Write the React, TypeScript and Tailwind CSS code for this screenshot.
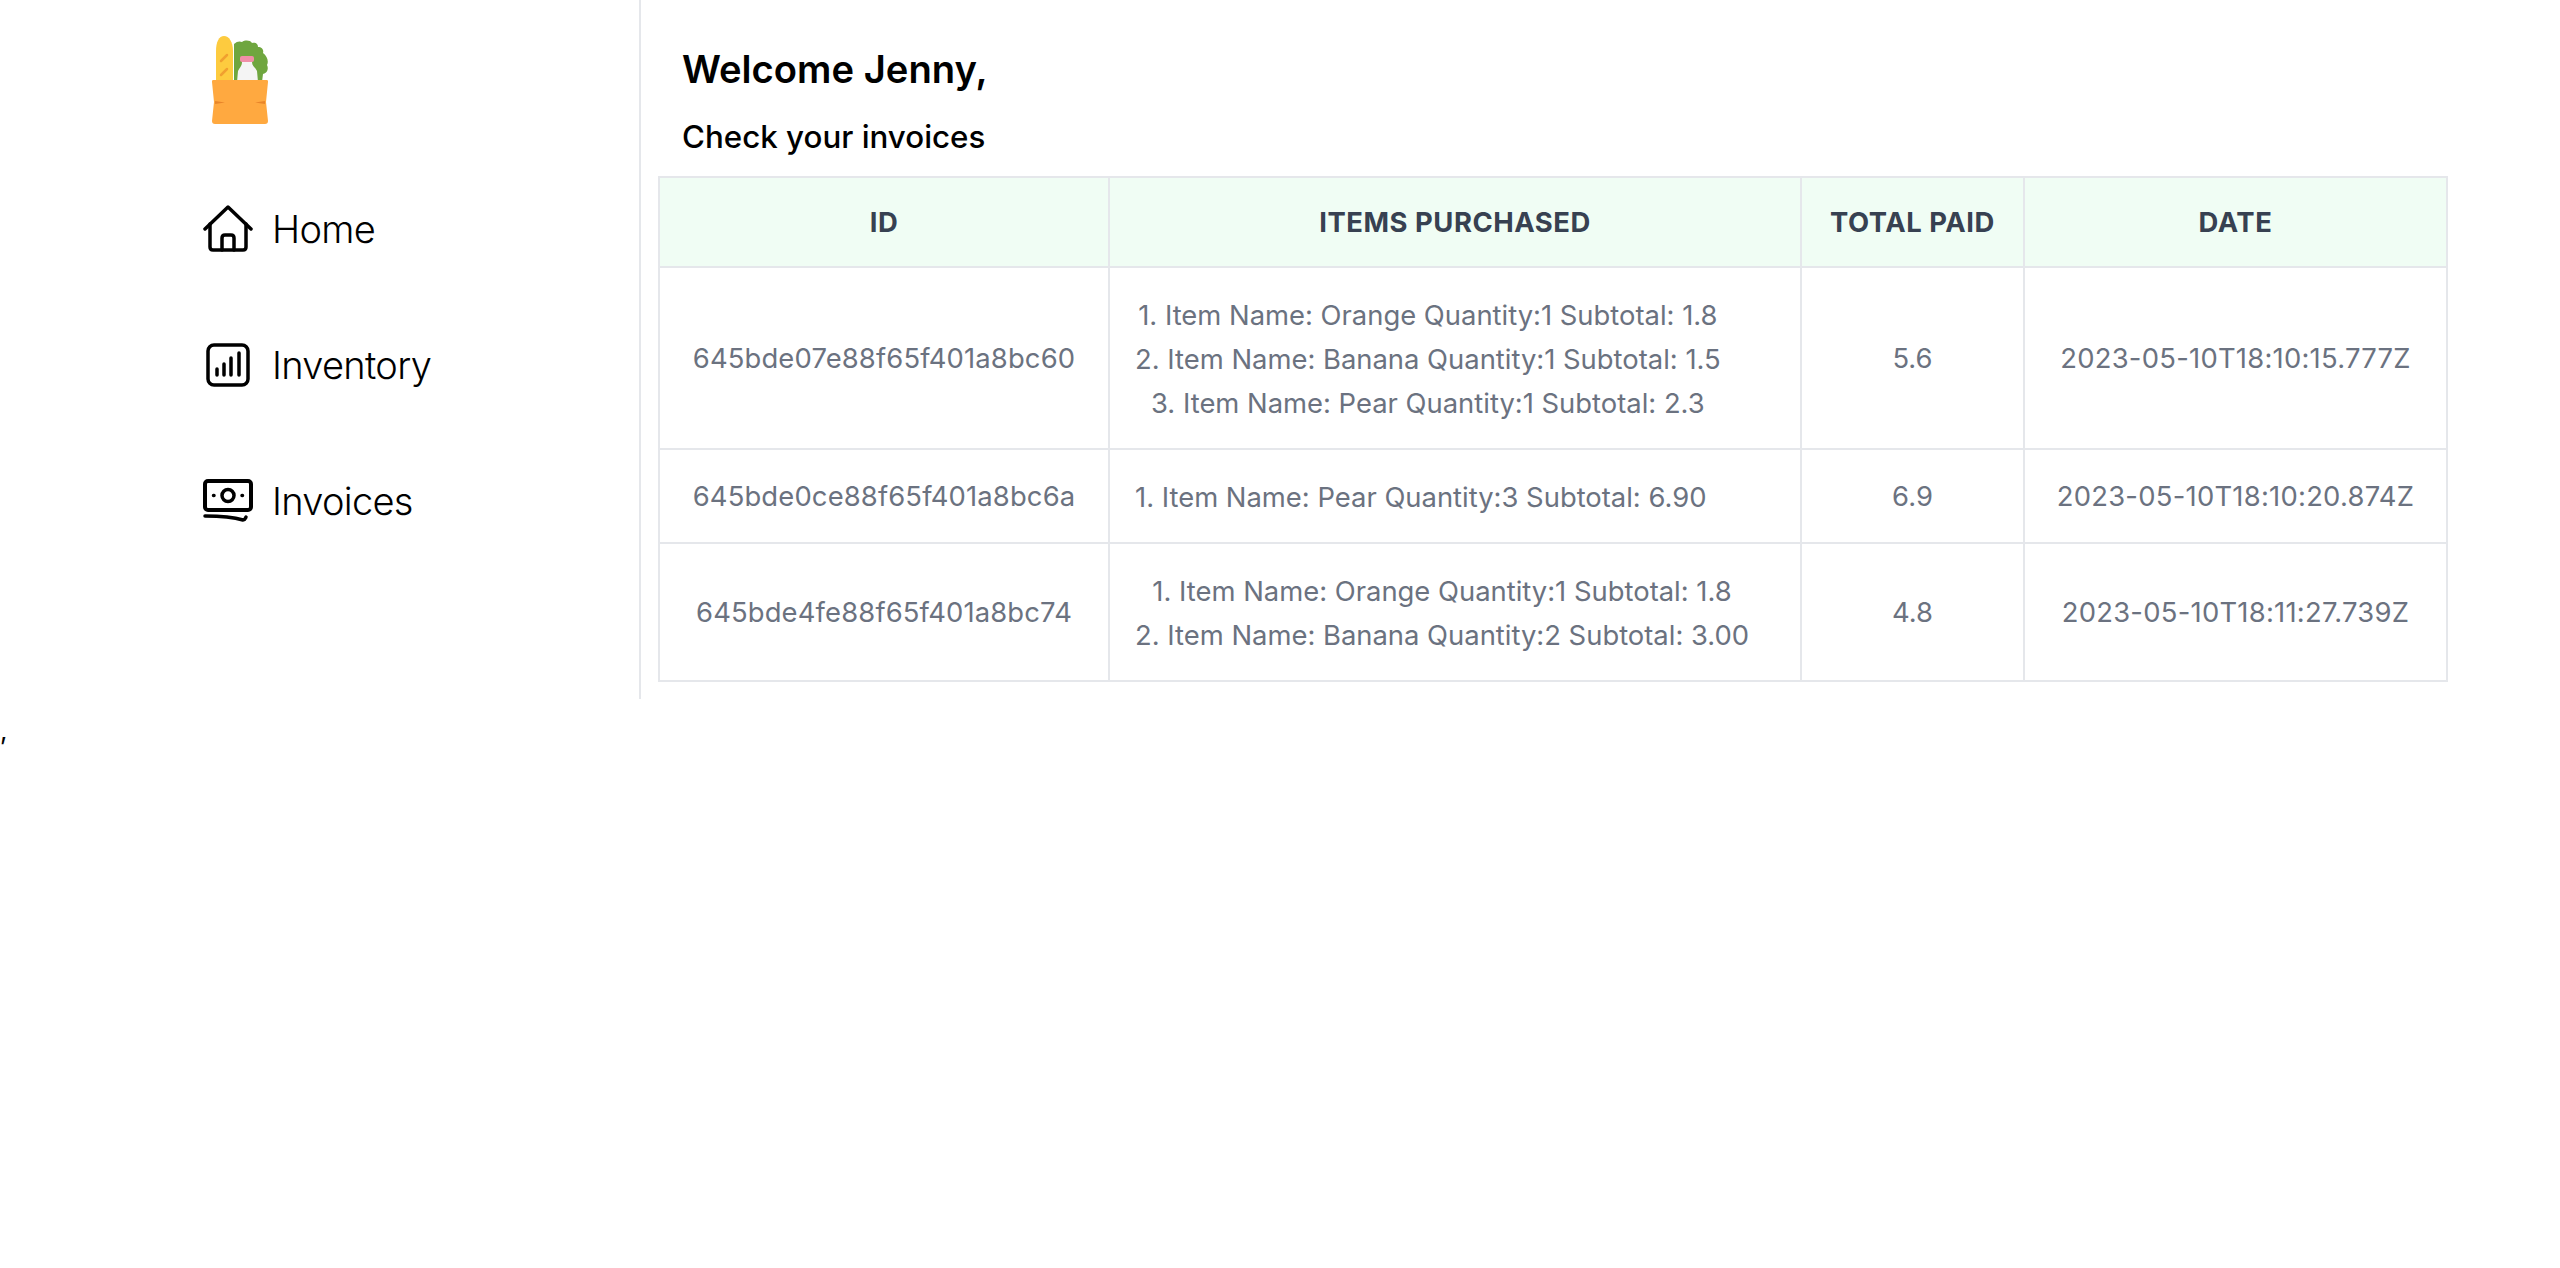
const rows = [
  {
    id: "645bde07e88f65f401a8bc60",
    items: [
      "1. Item Name: Orange Quantity:1 Subtotal: 1.8",
      "2. Item Name: Banana Quantity:1 Subtotal: 1.5",
      "3. Item Name: Pear Quantity:1 Subtotal: 2.3",
    ],
    total: "5.6",
    date: "2023-05-10T18:10:15.777Z",
  },
  {
    id: "645bde0ce88f65f401a8bc6a",
    items: ["1. Item Name: Pear Quantity:3 Subtotal: 6.90"],
    total: "6.9",
    date: "2023-05-10T18:10:20.874Z",
  },
  {
    id: "645bde4fe88f65f401a8bc74",
    items: [
      "1. Item Name: Orange Quantity:1 Subtotal: 1.8",
      "2. Item Name: Banana Quantity:2 Subtotal: 3.00",
    ],
    total: "4.8",
    date: "2023-05-10T18:11:27.739Z",
  },
];

const Logo = () => (
  <svg width="60" height="88" viewBox="0 0 60 88">
    <path d="M6 46V15C6 6 9 0 14 0s9 6 9 15v31z" fill="#fdcb3f" />
    <path d="M11 25l6-6M11 39l6-6" stroke="#f0a030" strokeWidth="2.500" strokeLinecap="round" />
    <path
      d="M24 46V8c3-3 6-3 8-2 3-2 8-2 10 1 4-1 6 1 6 4 4 0 6 3 5 6 4 3 6 8 4 12 2 4 0 8-4 9l-1 8z"
      fill="#6fa63f"
    />
    <path d="M27 46l1-11c2-4 4-5 4-9h10c0 4 3 5 5 9l1 11z" fill="#f4f4f4" />
    <rect x="30" y="20" width="14" height="6" rx="2" fill="#f08fa8" />
    <path
      d="M3 44h54c1 0 1 1 1 2l-2 20 2 19c0 2-1 3-3 3H5c-2 0-3-1-3-3l2-19-2-20c0-1 0-2 1-2z"
      fill="#ffa940"
    />
    <path d="M5 65l10 1.500-10 1.500zM55 65l-10 1.500 10 1.500z" fill="#e8852a" />
  </svg>
);

const HomeIcon = () => (
  <svg width="50" height="48" viewBox="0 0 50 48" fill="none" stroke="black" strokeWidth="3.500" strokeLinecap="round" strokeLinejoin="round">
    <path d="M2 24L25 2l23 22" />
    <path d="M7 19v23c0 2 1 3 3 3h30c2 0 3-1 3-3V19" />
    <path d="M19 45V33c0-2 1-3 3-3h6c2 0 3 1 3 3v12" />
  </svg>
);

const ChartIcon = () => (
  <svg width="44" height="44" viewBox="0 0 44 44" fill="none" stroke="black" strokeLinecap="round">
    <rect x="2" y="2" width="40" height="40" rx="6" strokeWidth="3.500" />
    <path d="M11 32v-6M18 32V21M25 32V15M33 32V10" strokeWidth="3.500" />
  </svg>
);

const MoneyIcon = () => (
  <svg width="50" height="44" viewBox="0 0 50 44" fill="none" stroke="black" strokeLinecap="round" strokeLinejoin="round">
    <rect x="2" y="2" width="46" height="29" rx="3" strokeWidth="4" />
    <circle cx="25" cy="16.500" r="6" strokeWidth="3.500" />
    <path d="M10.500 16.500h.5M39 16.500h.5" strokeWidth="3.500" />
    <path d="M2 37c12 0 28 1 38 4 2 0 2-1 3-3" strokeWidth="3.500" />
  </svg>
);

const nav = [
  { label: "Home", icon: <HomeIcon /> },
  { label: "Inventory", icon: <ChartIcon /> },
  { label: "Invoices", icon: <MoneyIcon /> },
];

export default function App() {
  return (
    <div className="font-['Inter',sans-serif] bg-white text-black min-h-[1268px]">
      <div className="flex">
        <aside className="w-[641px] h-[699px] shrink-0 border-r-2 border-[#e5e7eb] pt-[36px] pl-[203px]">
          <div className="pl-[7px]">
            <Logo />
          </div>
          <nav className="mt-[81px] flex flex-col gap-[88px]">
            {nav.map((n) => (
              <div key={n.label} className="flex items-center h-[48px]">
                <span className="w-[50px] flex justify-center">{n.icon}</span>
                <span className="ml-[19px] text-[38px] font-[260] leading-none tracking-[-0.7px]">{n.label}</span>
              </div>
            ))}
          </nav>
        </aside>
        <main className="pl-[17px] w-[1806px]">
          <h1 className="mt-[46px] pl-[24px] text-[38.2px] leading-[46px] font-semibold">Welcome Jenny,</h1>
          <h2 className="mt-[23px] pl-[24px] text-[31.3px] leading-[44px] font-medium">Check your invoices</h2>
          <table className="mt-[17px] w-[1788px] table-fixed border-collapse border-2 border-[#e5e7eb] text-[27.4px] text-[#6b7280]">
            <colgroup>
              <col className="w-[450px]" />
              <col className="w-[692px]" />
              <col className="w-[223px]" />
              <col className="w-[423px]" />
            </colgroup>
            <thead className="bg-[#f0fdf4] text-[#374151]">
              <tr className="h-[90px]">
                {["ID", "ITEMS PURCHASED", "TOTAL PAID", "DATE"].map((h) => (
                  <th key={h} className="border-2 border-[#e5e7eb] pt-[2px] font-bold tracking-[0.55px]">
                    {h}
                  </th>
                ))}
              </tr>
            </thead>
            <tbody>
              {rows.map((r) => (
                <tr key={r.id}>
                  <td className="border-2 border-[#e5e7eb] pt-[25px] pb-[23px] text-center tracking-[0.15px]">{r.id}</td>
                  <td className="border-2 border-[#e5e7eb] pt-[25px] pb-[23px] pl-[25px] text-left leading-[44px]">
                    <div className="inline-block text-center">
                      {r.items.map((it) => (
                        <div key={it}>{it}</div>
                      ))}
                    </div>
                  </td>
                  <td className="border-2 border-[#e5e7eb] pt-[25px] pb-[23px] text-center">{r.total}</td>
                  <td className="border-2 border-[#e5e7eb] pt-[25px] pb-[23px] text-center tracking-[0.25px]">{r.date}</td>
                </tr>
              ))}
            </tbody>
          </table>
        </main>
      </div>
      <div className="text-[26px] leading-[44px] mt-[10px]">,</div>
    </div>
  );
}
